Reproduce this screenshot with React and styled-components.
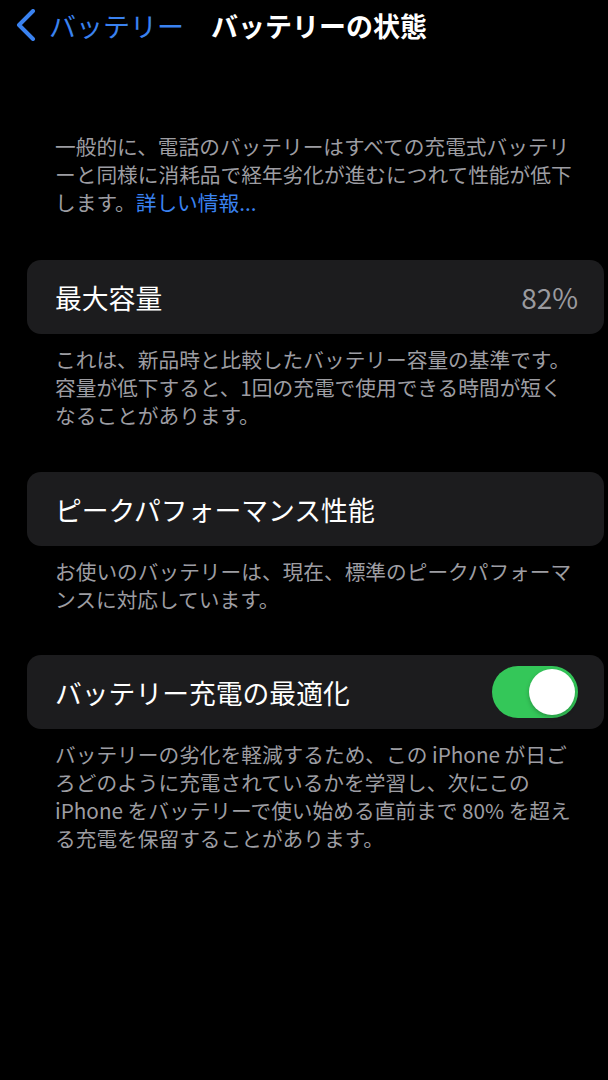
import React from "react";
import styled, { createGlobalStyle } from "styled-components";

const GlobalStyle = createGlobalStyle`
  body {
    margin: 0;
    background: #000;
    font-family: "Noto Sans CJK JP", "Noto Sans", sans-serif;
    -webkit-font-smoothing: antialiased;
  }
`;

const Screen = styled.div`
  width: 608px;
  min-height: 1080px;
  background: #000;
  color: #fff;
`;

const NavBar = styled.header`
  display: flex;
  align-items: center;
  height: 50px;
  padding-left: 16px;
`;

const BackButton = styled.button`
  display: flex;
  align-items: center;
  gap: 13px;
  padding: 0;
  border: none;
  background: none;
  color: #3a82f0;
  font-family: inherit;
  font-size: 27px;
  cursor: pointer;
`;

const Title = styled.h1`
  margin: 0 0 0 27px;
  font-size: 27px;
  font-weight: 600;
  color: #fff;
`;

const Content = styled.main`
  display: flex;
  flex-direction: column;
  padding: 0 4px 0 27px;
`;

const Intro = styled.p`
  margin: 82px 0 0;
  padding: 0 28px;
  font-size: 20.7px;
  line-height: 28px;
  color: #9d9da2;
`;

const Link = styled.a`
  color: #3a82f0;
  text-decoration: none;
`;

const Section = styled.section`
  margin-top: ${(p) => p.$gap}px;
`;

const Card = styled.div`
  display: flex;
  align-items: center;
  justify-content: space-between;
  height: 74px;
  padding: 0 26px 0 28px;
  border-radius: 14px;
  background: #1c1c1e;
`;

const Label = styled.span`
  font-size: 26.8px;
  color: #fff;
`;

const Value = styled.span`
  font-size: 28px;
  color: #9a9a9f;
`;

const Footnote = styled.p`
  margin: 11px 0 0;
  padding: 0 28px;
  font-size: 20.7px;
  line-height: 28px;
  color: #9d9da2;
`;

const Toggle = styled.button`
  position: relative;
  width: 86px;
  height: 52px;
  padding: 0;
  border: none;
  border-radius: 26px;
  background: ${(p) => (p.$on ? "#34c759" : "#39393d")};
  cursor: pointer;

  &::after {
    content: "";
    position: absolute;
    top: 3px;
    left: ${(p) => (p.$on ? "37px" : "3px")};
    width: 46px;
    height: 46px;
    border-radius: 50%;
    background: #fff;
    box-shadow: 0 2px 4px rgba(0, 0, 0, 0.25);
  }
`;

const Chevron = () => (
  <svg width="20" height="32" viewBox="0 0 20 32" fill="none">
    <path
      d="M17 2 L3 16 L17 30"
      stroke="#3a82f0"
      strokeWidth="4"
      strokeLinecap="round"
      strokeLinejoin="round"
    />
  </svg>
);

export default function App() {
  const [optimized, setOptimized] = React.useState(true);

  return (
    <Screen>
      <GlobalStyle />
      <NavBar>
        <BackButton>
          <Chevron />
          バッテリー
        </BackButton>
        <Title>バッテリーの状態</Title>
      </NavBar>

      <Content>
        <Intro>
          一般的に、電話のバッテリーはすべての充電式バッテリ
          <br />
          ーと同様に消耗品で経年劣化が進むにつれて性能が低下
          <br />
          します。<Link href="#">詳しい情報...</Link>
        </Intro>

        <Section $gap={44}>
          <Card>
            <Label>最大容量</Label>
            <Value>82%</Value>
          </Card>
          <Footnote>
            これは、新品時と比較したバッテリー容量の基準です。
            <br />
            容量が低下すると、1回の充電で使用できる時間が短く
            <br />
            なることがあります。
          </Footnote>
        </Section>

        <Section $gap={43}>
          <Card>
            <Label>ピークパフォーマンス性能</Label>
          </Card>
          <Footnote>
            お使いのバッテリーは、現在、標準のピークパフォーマ
            <br />
            ンスに対応しています。
          </Footnote>
        </Section>

        <Section $gap={42}>
          <Card>
            <Label>バッテリー充電の最適化</Label>
            <Toggle
              $on={optimized}
              aria-pressed={optimized}
              onClick={() => setOptimized(!optimized)}
            />
          </Card>
          <Footnote>
            バッテリーの劣化を軽減するため、この iPhone が日ご
            <br />
            ろどのように充電されているかを学習し、次にこの
            <br />
            iPhone をバッテリーで使い始める直前まで 80% を超え
            <br />
            る充電を保留することがあります。
          </Footnote>
        </Section>
      </Content>
    </Screen>
  );
}
